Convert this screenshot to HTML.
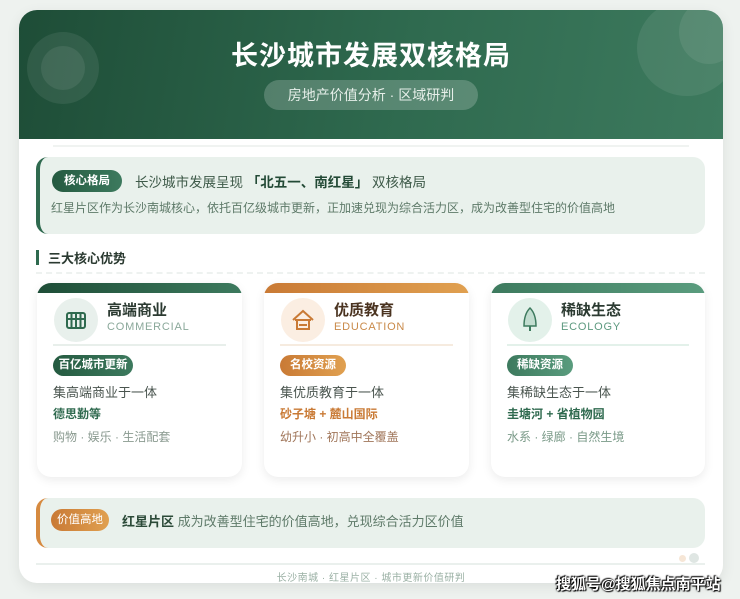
<!DOCTYPE html>
<html><head><meta charset="utf-8"><style>
*{margin:0;padding:0;box-sizing:border-box}
body{width:740px;height:599px;background:#eef2ef;font-family:"Liberation Sans","Noto Sans CJK SC",sans-serif;position:relative;overflow:hidden}
.card{position:absolute;left:19px;top:10px;width:704px;height:573px;background:#fff;border-radius:18px;overflow:hidden;box-shadow:0 4px 14px rgba(0,0,0,.08)}
.hd{position:absolute;left:0;top:0;width:704px;height:129px;background:linear-gradient(100deg,#1e4d37,#2f6a4f 55%,#3d7a5e);overflow:hidden}
.c{position:absolute;border-radius:50%;background:rgba(255,255,255,.08)}
.t{position:absolute;top:24px;width:100%;text-align:center;color:#fff;font-size:27px;font-weight:bold;letter-spacing:1px}
.st{position:absolute;left:245px;top:70px;width:214px;height:30px;border-radius:15px;background:rgba(255,255,255,.2);color:#e6efe9;font-size:14px;text-align:center;line-height:30px}
.abs{position:absolute}
.box{position:absolute;background:#e9f1ec;border-radius:12px;border-left:4px solid #2f6a4f}
.tag{position:absolute;border-radius:11px;color:#fff;font-size:11.5px;font-weight:bold;text-align:center}
.g{background:linear-gradient(90deg,#245a40,#3d7a5e)}
.o{background:linear-gradient(90deg,#c97a35,#e0a050)}
.f{position:absolute;top:273px;height:194px;background:#fff;border-radius:14px;box-shadow:0 3px 10px rgba(0,0,0,.08);overflow:hidden}
.f .bar{height:10px}
.ic{position:absolute;left:17px;top:15px;width:44px;height:44px;border-radius:50%}
.ft{position:absolute;left:70px;top:16px;font-size:15px;font-weight:bold;color:#2b3a31}
.fe{position:absolute;left:70px;top:38px;font-size:11px;letter-spacing:.8px}
.dv{position:absolute;left:16px;top:61px;height:2px}
.l1{position:absolute;left:16px;top:99px;font-size:13px;color:#4a554f}
.l2{position:absolute;left:16px;top:122px;font-size:12px;font-weight:bold}
.l3{position:absolute;left:16px;top:145px;font-size:12px}
</style></head><body>
<div class="card">
 <div class="hd">
  <div class="c" style="left:8px;top:22px;width:72px;height:72px"></div>
  <div class="c" style="left:22px;top:36px;width:44px;height:44px"></div>
  <div class="c" style="left:618px;top:-10px;width:100px;height:96px"></div>
  <div class="c" style="left:660px;top:-10px;width:60px;height:64px"></div>
  <div class="t">长沙城市发展双核格局</div>
  <div class="st">房地产价值分析 · 区域研判</div>
 </div>
 <div class="abs" style="left:34px;top:135px;width:636px;height:2px;background:#f0f3f1"></div>
 <div class="box" style="left:17px;top:147px;width:669px;height:77px">
  <div class="tag g" style="left:12px;top:13px;width:70px;height:22px;line-height:22px">核心格局</div>
  <div class="abs" style="left:95px;top:14px;font-size:13.5px;color:#3e5a49">长沙城市发展呈现 <b style="color:#234a36">「北五一、南红星」</b> 双核格局</div>
  <div class="abs" style="left:11px;top:42px;font-size:12px;color:#5e7a69">红星片区作为长沙南城核心，依托百亿级城市更新，正加速兑现为综合活力区，成为改善型住宅的价值高地</div>
 </div>
 <div class="abs" style="left:17px;top:240px;width:3px;height:15px;background:#2f6a4f"></div>
 <div class="abs" style="left:29px;top:238px;font-size:13px;font-weight:bold;color:#2b3a31">三大核心优势</div>
 <div class="abs" style="left:17px;top:262px;width:669px;border-top:2px dashed #eef2f0"></div>

 <div class="f" style="left:18px;width:205px">
  <div class="bar" style="background:linear-gradient(90deg,#1e4d37,#3d7a5e)"></div>
  <div class="ic" style="background:#e8f0ec"><svg width="44" height="44"><g fill="none" stroke="#2f6a4f" stroke-width="2"><rect x="13" y="15" width="18" height="15" rx="2"/><path d="M13 21h18M17.5 15v15M22 15v15M26.5 15v15"/></g></svg></div>
  <div class="ft">高端商业</div><div class="fe" style="color:#8aa89a">COMMERCIAL</div>
  <div class="dv" style="width:173px;background:#e8efeb"></div>
  <div class="tag g" style="left:16px;top:72px;width:80px;height:21px;line-height:21px">百亿城市更新</div>
  <div class="l1">集高端商业于一体</div>
  <div class="l2" style="color:#2f6a4f">德思勤等</div>
  <div class="l3" style="color:#8a9a90">购物 · 娱乐 · 生活配套</div>
 </div>
 <div class="f" style="left:245px;width:205px">
  <div class="bar" style="background:linear-gradient(90deg,#c97a35,#e0a050)"></div>
  <div class="ic" style="background:#fbeee2"><svg width="44" height="44"><g fill="none" stroke="#c97a35" stroke-width="2"><path d="M12 22l10-9 10 9M14 22h16M16 22v9h12v-9M18 27h8"/></g></svg></div>
  <div class="ft" style="color:#4a3320">优质教育</div><div class="fe" style="color:#c98a4a">EDUCATION</div>
  <div class="dv" style="width:173px;background:#f6ebdf"></div>
  <div class="tag o" style="left:16px;top:72px;width:66px;height:21px;line-height:21px">名校资源</div>
  <div class="l1">集优质教育于一体</div>
  <div class="l2" style="color:#c97a35">砂子塘 + 麓山国际</div>
  <div class="l3" style="color:#a0765a">幼升小 · 初高中全覆盖</div>
 </div>
 <div class="f" style="left:472px;width:214px">
  <div class="bar" style="background:linear-gradient(90deg,#3d7a5e,#5a9c7e)"></div>
  <div class="ic" style="background:#e3f1ea"><svg width="44" height="44"><path d="M22 10c-5 5-6 12-6 18h12c0-6-1-13-6-18z" fill="#c2ddd0" stroke="#3d7a5e" stroke-width="1.5"/><path d="M22 28v5" stroke="#3d7a5e" stroke-width="2"/></svg></div>
  <div class="ft">稀缺生态</div><div class="fe" style="color:#5e9a80">ECOLOGY</div>
  <div class="dv" style="width:182px;background:#e3f1ea"></div>
  <div class="tag g" style="left:16px;top:72px;width:66px;height:21px;line-height:21px;background:linear-gradient(90deg,#3d7a5e,#5a9c7e)">稀缺资源</div>
  <div class="l1">集稀缺生态于一体</div>
  <div class="l2" style="color:#2f6a4f">圭塘河 + 省植物园</div>
  <div class="l3" style="color:#7a9a88">水系 · 绿廊 · 自然生境</div>
 </div>

 <div class="box" style="left:17px;top:488px;width:669px;height:50px;border-left-color:#d68a40">
  <div class="tag o" style="left:11px;top:11px;width:58px;height:22px;line-height:22px;font-weight:normal">价值高地</div>
  <div class="abs" style="left:82px;top:13px;font-size:13px;color:#5e7a69"><b style="color:#2b4a38">红星片区</b> 成为改善型住宅的价值高地，兑现综合活力区价值</div>
 </div>
 <div class="abs" style="left:660px;top:545px;width:7px;height:7px;border-radius:50%;background:#f6e6d6"></div>
 <div class="abs" style="left:670px;top:543px;width:10px;height:10px;border-radius:50%;background:#dfe6e3"></div>
 <div class="abs" style="left:17px;top:553px;width:669px;height:2px;background:#eaf0ed"></div>
 <div class="abs" style="left:0;top:559px;width:704px;text-align:center;font-size:10px;color:#9ab0a4;letter-spacing:.5px">长沙南城 · 红星片区 · 城市更新价值研判</div>
</div>
<div class="abs" style="left:556px;top:573px;font-size:15px;font-weight:bold;color:#fff;text-shadow:0 0 2px #000,1px 1px 1px #000,-1px -1px 1px #000">搜狐号@搜狐焦点南平站</div>
</body></html>
